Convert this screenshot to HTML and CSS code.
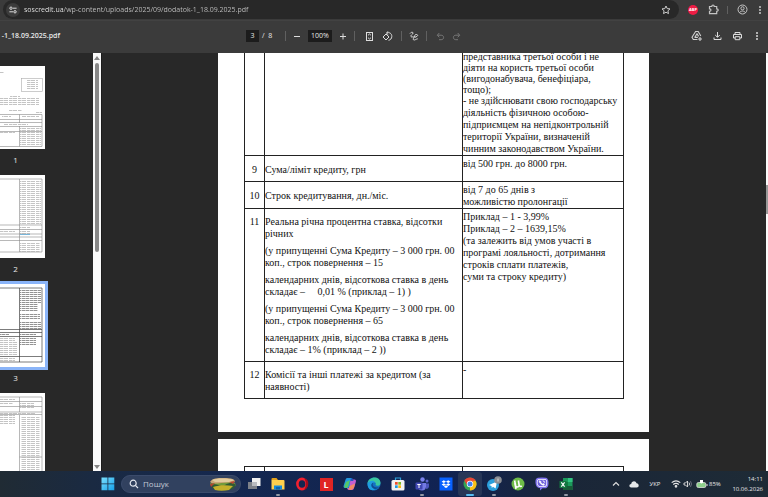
FILE: index.html
```html
<!DOCTYPE html>
<html lang="uk">
<head>
<meta charset="utf-8">
<title>dodatok-1_18.09.2025.pdf</title>
<link rel="stylesheet" href="styles.css">
</head>
<body>
<header class="browser-bar">
  <div class="address">
    <button class="site-info" aria-label="Site information"><svg width="8" height="8" viewBox="0 0 8 8" fill="none" stroke="#ddd"><circle cx="2" cy="2.2" r="1.2"/><path d="M4 2.2h3.6M.4 5.8H4"/><circle cx="6" cy="5.8" r="1.2"/></svg></button>
    <input class="url" aria-label="Address" value="soscredit.ua/wp-content/uploads/2025/09/dodatok-1_18.09.2025.pdf">
    <button class="slot-20" aria-label="Bookmark"><svg width="10" height="10" viewBox="0 0 10 10" fill="none" stroke="#ccc"><path d="M5 1l1.2 2.6 2.8.3-2.1 1.9.6 2.8L5 7.2 2.500 8.600l.6-2.800L1 3.900l2.800-.3z"/></svg></button>
  </div>
  <button class="slot-20" aria-label="AdBlock"><span class="abp">ABP</span></button>
  <button class="slot-20" aria-label="Extensions"><svg width="11" height="11" viewBox="0 0 11 11" fill="none" stroke="#c4c4c4" stroke-width="1.200"><path d="M1.500 2.500h2.300c0-2 2.400-2 2.400 0h2.500v2.400c2 0 2 2.400 0 2.400v2.400H1.500V7.300c2 0 2-2.400 0-2.400z"/></svg></button>
  <span class="divider browser-divider"></span>
  <button class="slot-20" aria-label="Profile"><svg width="11" height="11" viewBox="0 0 11 11" fill="none" stroke="#c4c4c4"><circle cx="5.500" cy="5.500" r="4.500"/><circle cx="5.500" cy="4.300" r="1.600"/><path d="M2.500 8.800c1-2.300 5-2.300 6 0"/></svg></button>
  <button class="slot-16" aria-label="Menu"><svg width="4" height="10" viewBox="0 0 4 10" fill="#c8c8c8"><circle cx="2" cy="2" r="1"/><circle cx="2" cy="5" r="1"/><circle cx="2" cy="8" r="1"/></svg></button>
</header>

<div class="pdf-bar">
  <div class="file-name">-1_18.09.2025.pdf</div>
  <input class="box page-box" aria-label="Page" value="3">
  <span class="page-total">/&nbsp; 8</span>
  <span class="divider"></span>
  <button class="slot-12" aria-label="Zoom out"><svg width="8" height="8" viewBox="0 0 8 8" stroke="#ddd"><path d="M1 4.500h6"/></svg></button>
  <input class="box zoom-box" aria-label="Zoom" value="100%">
  <button class="slot-12" aria-label="Zoom in"><svg width="8" height="8" viewBox="0 0 8 8" stroke="#ddd"><path d="M1 4.500h6M4 1.500v6"/></svg></button>
  <span class="divider"></span>
  <button class="slot-18" aria-label="Fit to page"><svg width="9" height="11" viewBox="0 0 9 11" fill="none" stroke="#ddd"><rect x="1.500" y="1.500" width="6" height="8"/><path d="M3 4.300l1.500-1.300L6 4.300M3 6.700L4.500 8 6 6.700"/></svg></button>
  <button class="slot-18" aria-label="Rotate"><svg width="11" height="11" viewBox="0 0 11 11" fill="none" stroke="#ddd"><path d="M4 3L1 6l3 3 3-3zM4.500 2c3-1.300 5.500.8 5.300 3.500-.1 2-1.300 3.500-3.300 3.800M6.300.3L4.500 2l1.800 1.700"/></svg></button>
  <span class="divider"></span>
  <button class="slot-14" aria-label="Draw"><svg width="10" height="10" viewBox="0 0 10 10" fill="none" stroke="#ddd"><path d="M1 2.500C2 1 4.200.8 4 2.200 3.700 3.500 1.300 4.200 2 5.600c.6 1 2.300-.4 2.800.4C5.200 7 3.500 8 4.500 8.800 6 9.500 7 8 8.700 7.800"/><path d="M5.500 6.200l.3-1.700L7.300 3l1.400 1.400L7.200 6z"/></svg></button>
  <span class="divider"></span>
  <button class="slot-16" aria-label="Undo"><svg width="9" height="9" viewBox="0 0 9 9" fill="none" stroke="#777"><path d="M3.300 1L1.300 3.200l2 2.100M1.500 3.200h3.700c3.200 0 3.200 4.500 0 4.500H3"/></svg></button>
  <button class="slot-16" aria-label="Redo"><svg width="9" height="9" viewBox="0 0 9 9" fill="none" stroke="#777"><path d="M5.700 1l2 2.200-2 2.100M7.500 3.200H3.800c-3.200 0-3.200 4.500 0 4.500H6"/></svg></button>
  <div class="pdf-actions">
    <button class="slot-20" aria-label="Save to Drive"><svg width="12" height="12" viewBox="0 0 12 12" fill="none" stroke="#d0d0d0" stroke-width="1.100"><path d="M6.500 9.500H2.300L1 7.300 4.600 1.500h2.600L9.800 6M3.800 7.300L6 3.800l1.600 2.600M3.500 7.400h3.400M9 7v4M7 9h4"/></svg></button>
    <button class="slot-20" aria-label="Download"><svg width="9" height="10" viewBox="0 0 9 10" fill="none" stroke="#ddd"><path d="M4.500 1v5M2.200 4l2.300 2.300L6.800 4M1 6.500v2h7v-2"/></svg></button>
    <button class="slot-20" aria-label="Print"><svg width="11" height="10" viewBox="0 0 11 10" fill="none" stroke="#ddd"><path d="M3 3.500v-2h5v2M3 7H1.500V3.500h8V7H8M3.200 5.700h4.600v3H3.200z"/></svg></button>
    <button class="slot-20" aria-label="More"><svg width="4" height="10" viewBox="0 0 4 10" fill="#d8d8d8"><circle cx="2" cy="2" r="1"/><circle cx="2" cy="5" r="1"/><circle cx="2" cy="8" r="1"/></svg></button>
  </div>
</div>

<main class="workspace">
  <nav class="sidebar" aria-label="Pages">
    <div class="thumbs">
      <figure class="thumb-item">
        <svg class="thumb" viewBox="0 0 59 83">
          <defs>
            <pattern id="text" width="9" height="2" patternUnits="userSpaceOnUse"><path d="M0 .5h4M5 .5h3.500" stroke="#aaa" stroke-width=".7"/></pattern>
            <pattern id="dark" width="8" height="2" patternUnits="userSpaceOnUse"><path d="M0 .5h3M3.600 .5h4" stroke="#777" stroke-width=".8"/></pattern>
          </defs>
          <rect x="12" y="6" width="6" height="2" fill="url(#text)"/><rect x="35.500" y="12.500" width="21" height="13" fill="none" stroke="#aaa" stroke-width=".6"/><rect x="40" y="14" width="12" height="10" fill="url(#text)"/><rect x="24" y="29" width="10" height="2" fill="url(#text)"/><rect x="5" y="32" width="48" height="8" fill="url(#text)"/><rect x="22" y="44" width="14" height="1" fill="url(#text)"/><rect x="50" y="46" width="6" height="1" fill="url(#text)"/>
          <path d="M2 48.500h54v32H2M33.500 48.500v8.500M33.500 60v20.500M2 53.500h54M2 56.500h54M2 60.500h54M2 65.500h54" fill="none" stroke="#888" stroke-width=".6"/><rect x="16" y="50" width="9" height="1" fill="url(#text)"/><rect x="36" y="50" width="17" height="2" fill="url(#text)"/><rect x="18" y="58" width="24" height="1" fill="url(#text)"/><rect x="34" y="61" width="21" height="19" fill="url(#text)"/><rect x="8" y="66" width="21" height="2" fill="url(#text)"/>
        </svg>
        <figcaption>1</figcaption>
      </figure>
      <figure class="thumb-item">
        <svg class="thumb" viewBox="0 0 59 83"><path d="M2 4h54v73H2M33.500 4v73M2 50h54M2 54.500h54M2 59h54M2 62h54M2 65.500h54" fill="none" stroke="#888" stroke-width=".6"/><rect x="34" y="5" width="21" height="44" fill="url(#text)"/><rect x="34" y="51" width="10" height="8" fill="url(#text)"/><rect x="34" y="59" width="10" height="1" fill="#79b5d8"/><rect x="4" y="56" width="25" height="2" fill="url(#text)"/><rect x="20" y="63" width="22" height="1" fill="url(#text)"/><rect x="34" y="67" width="20" height="10" fill="url(#text)"/><rect x="8" y="67" width="6" height="1" fill="url(#text)"/></svg>
        <figcaption>2</figcaption>
      </figure>
      <figure class="thumb-item current">
        <svg class="thumb" viewBox="0 0 59 83"><path d="M2 4h54v74H2M33.500 4v74M2 45.500h54M2 48.500h54M2 52.500h54M2 72.500h54" fill="none" stroke="#444" stroke-width=".7"/><rect x="34" y="5" width="21" height="14" fill="url(#dark)"/><rect x="34" y="20" width="18" height="8" fill="url(#dark)"/><rect x="34" y="30" width="20" height="6" fill="url(#dark)"/><rect x="34" y="38" width="21" height="8" fill="url(#dark)"/><rect x="34" y="49" width="16" height="13" fill="url(#dark)"/><rect x="3" y="47" width="18" height="1" fill="url(#dark)"/><rect x="3" y="50" width="20" height="1" fill="url(#dark)"/><rect x="3" y="54" width="26" height="3" fill="url(#text)"/><rect x="3" y="58" width="29" height="13" fill="url(#text)"/><rect x="3" y="74" width="26" height="3" fill="url(#text)"/></svg>
        <figcaption>3</figcaption>
      </figure>
      <figure class="thumb-item">
        <svg class="thumb" viewBox="0 0 59 83"><path d="M2 4h54v79M33.500 4v15M33.500 22v61M2 8.500h54M2 13.500h54M2 19h54M2 21.500h54M33.500 64h22.500" fill="none" stroke="#888" stroke-width=".6"/><rect x="3" y="5" width="26" height="3" fill="url(#text)"/><rect x="3" y="10" width="24" height="2" fill="url(#text)"/><rect x="34" y="9" width="14" height="7" fill="url(#text)"/><rect x="12" y="20" width="38" height="1" fill="url(#text)"/><rect x="3" y="22" width="26" height="10" fill="url(#text)"/><rect x="35" y="23" width="19" height="60" fill="url(#text)"/></svg>
      </figure>
    </div>
    <div class="scrollbar"><span class="arrow-up"></span><span class="scroll-thumb"></span><span class="arrow-down"></span></div>
  </nav>

  <section class="viewer">
    <article class="sheet first-sheet">
      <table>
        <colgroup><col class="col-number"><col class="col-name"><col class="col-value"></colgroup>
        <tr class="row-8"><td></td><td></td><td><p class="tight">представника третьої особи і не<br>діяти на користь третьої особи<br>(вигодонабувача, бенефіціара,<br>тощо);</p><p>- не здійснювати свою господарську<br>діяльність фізичною особою-<br>підприємцем на непідконтрольній<br>території України, визначеній<br>чинним законодавством України.</p></td></tr>
        <tr class="row-9"><td class="middle">9</td><td class="middle">Сума/ліміт кредиту, грн</td><td>від 500 грн. до 8000 грн.</td></tr>
        <tr class="row-10"><td class="middle">10</td><td class="middle">Строк кредитування, дн./міс.</td><td>від 7 до 65 днів з<br>можливістю пролонгації</td></tr>
        <tr class="row-11"><td class="lowered">11</td><td class="lowered"><p>Реальна річна процентна ставка, відсотки<br>річних</p><p>(у припущенні Сума Кредиту – 3 000 грн. 00<br>коп., строк повернення – 15</p><p>календарних днів, відсоткова ставка в день<br>складає –&nbsp;&nbsp;&nbsp; &nbsp;0,01 % (приклад – 1) )</p><p>(у припущенні Сума Кредиту – 3 000 грн. 00<br>коп., строк повернення – 65</p><p>календарних днів, відсоткова ставка в день<br>складає – 1% (приклад – 2 ))</p></td><td>Приклад – 1 - 3,99%<br>Приклад – 2 – 1639,15%<br>(та залежить від умов участі в<br>програмі лояльності, дотримання<br>строків сплати платежів,<br>суми та строку кредиту)</td></tr>
        <tr class="row-12"><td class="lowered">12</td><td class="lowered">Комісії та інші платежі за кредитом (за<br>наявності)</td><td>-</td></tr>
      </table>
    </article>
    <article class="sheet next-sheet">
      <table>
        <colgroup><col class="col-number"><col class="col-name"><col class="col-value"></colgroup>
        <tr class="row-12"><td></td><td></td><td></td></tr>
      </table>
    </article>
  </section>
  <div class="page-scroll"><span></span></div>
</main>

<footer class="taskbar">
  <button class="app" aria-label="Start"><svg width="14" height="14" viewBox="0 0 14 14"><defs><linearGradient id="win" x2="1" y2="1"><stop stop-color="#7be0ff"/><stop offset="1" stop-color="#159fe8"/></linearGradient></defs><path fill="url(#win)" d="M.5.500h6v6h-6zM7.300.500h6v6h-6zM.5 7.300h6v6h-6zM7.300 7.300h6v6h-6z"/></svg></button>
  <label class="search">
    <svg width="10" height="10" viewBox="0 0 10 10" fill="none" stroke="#e4e8f0" stroke-width="1.200"><circle cx="4.200" cy="4.200" r="3"/><path d="M6.400 6.400L9 9"/></svg>
    <input placeholder="Пошук" aria-label="Пошук">
    <svg width="28" height="15" viewBox="0 0 28 15"><path d="M1 5C3 1 9 1 14 1s12 0 12 4l-5 2H4z" fill="#c9a878"/><path d="M3 3c5-2 15-2 22 0l-4 2H6z" fill="#e3cc9e"/><path d="M1 6c7 2 15-2 25 0l1 3C19 8 9 12 2 9z" fill="#729b3c"/><path d="M2 8c6-3 9 3 14 0s9-2 11 0l-3 4c-7 2-14 2-20 0z" fill="#2f5b34"/><path d="M4 10c6-2 13-2 20-1l-4 4c-5 1-10 1-14 0z" fill="#c5b02b"/><path d="M1 7l5-1-4 4zM20 5l6-1-2 3z" fill="#b4462e"/></svg>
  </label>
  <button class="app" aria-label="Task view"><svg width="14" height="14" viewBox="0 0 14 14"><path d="M5 1h8.500v8H5z" fill="#f0f0f0"/><path d="M1 5h9v7H1z" fill="#7c8088"/><path d="M5 5h5v4H5z" fill="#b9bbc0"/></svg></button>
  <button class="app open" aria-label="Explorer"><svg width="14" height="14" viewBox="0 0 14 14"><path d="M.5 2q0-1 1-1h4L7 3H.5z" fill="#e5a21a"/><path d="M.5 3h12q1 0 1 1v8.500H.5z" fill="#ffd04d"/><path d="M3 8.500h8v4H3z" fill="#168bd9"/><path d="M5 10h4v2.500H5z" fill="#0c65ae"/></svg></button>
  <button class="app" aria-label="Opera"><svg width="14" height="14" viewBox="0 0 14 14"><ellipse cx="7" cy="7" rx="4.600" ry="5.100" fill="none" stroke="#f2202f" stroke-width="2.600"/><path d="M9 1.200c3.300.6 4.600 3 4.300 6-.3 3-2 5-4.300 5.600 2.600-3 2.600-8.600 0-11.600" fill="#a50b1c"/></svg></button>
  <button class="app" aria-label="Liga"><span class="letter-app">L</span></button>
  <button class="app" aria-label="Copilot"><svg width="14" height="14" viewBox="0 0 14 14"><path d="M4 1h4q1 0 1.400 1L7 9q-.6 2-2 2H2Q0 11 .7 8.600L2.400 3Q3 1 4 1z" fill="#2299df"/><path d="M3 5l-2 5q2 2 4 0l2-7z" fill="#54c768"/><path d="M7 4q.6-1.500 2-1.500h2.500q2 0 1.300 2.500l-1.600 5.500Q10.600 13 9 13H6q-1.500 0-2-2h1.500q1 0 1.300-1.500z" fill="#c55fd2"/><path d="M6.500 9L5.500 12.500q4 1.500 5.500-2l1-4z" fill="#f38a65"/><path d="M8 1q2 0 2.500 3H7.500l-1 3z" fill="#2459c2"/></svg></button>
  <button class="app" aria-label="Edge"><svg width="14" height="14" viewBox="0 0 14 14"><circle cx="7" cy="7" r="6.500" fill="#1572c2"/><path d="M.5 7C.5-1 13.500-2 13.500 6c0 3-4 3.500-5 2 .8-1.500 0-3.300-2-3.300C4 4.700 1 5.500.5 7z" fill="#3ac7a0"/><path d="M.5 7C1 3.700 7.500 2.700 8 5.500 4 4.500 3.500 10 8 12.800 3 14.500.5 11 .5 7z" fill="#1e9de0"/><path d="M6.300 5.500c-2 3 1 5.500 5.500 4.800-2 2.500-6 2-7.300-.8-.8-2 .4-3.500 1.800-4z" fill="#104a91"/></svg></button>
  <button class="app" aria-label="Store"><svg width="14" height="14" viewBox="0 0 14 14"><path d="M4.500 4V1h5v3" fill="none" stroke="#2d9fd8" stroke-width="1.200"/><rect x=".5" y="3" width="13" height="10.500" rx="1.500" fill="#f2f2f2"/><path d="M4 5h2.700v2.700H4z" fill="#ee502c"/><path d="M7.300 5H10v2.700H7.300z" fill="#7bb928"/><path d="M4 8.300h2.700V11H4z" fill="#1c9ce5"/><path d="M7.300 8.300H10V11H7.300z" fill="#f7b817"/></svg></button>
  <button class="app open" aria-label="Teams"><svg width="14" height="14" viewBox="0 0 14 14"><circle cx="7.500" cy="2.500" r="2.200" fill="#7a82ec"/><circle cx="12" cy="4" r="1.500" fill="#5b63cf"/><path d="M4 6h7v4q-.5 3.500-4 3.500T3 10z" fill="#7379e4"/><path d="M11 6.500h3V10q-.5 2-3 2z" fill="#4e56be"/><rect x=".5" y="5.500" width="7" height="7" rx="1" fill="#4048b2"/><path d="M2.300 7.500h3.400M4 7.500V11" stroke="#fff"/></svg></button>
  <button class="app" aria-label="Dropbox"><svg width="14" height="14" viewBox="0 0 14 14"><path d="M.5.500h13v13H.5z" fill="#0861fe"/><path d="M4.800 3.300L7 4.700 4.800 6.100 2.600 4.700zM9.200 3.300l2.200 1.400-2.200 1.400L7 4.700zM4.800 6.200L7 7.600 4.800 9 2.600 7.600zM9.200 6.200l2.200 1.400L9.200 9 7 7.600zM7 8.300l2.200 1.400L7 11.100 4.800 9.700z" fill="#fff"/></svg></button>
  <button class="app open active" aria-label="Chrome"><svg width="14" height="14" viewBox="0 0 14 14"><circle cx="7" cy="7" r="6.500" fill="#34a553"/><path d="M1.400 3.700a6.500 6.500 0 0 1 11.200 0L7 6.500z" fill="#e94435"/><path d="M12.600 3.700A6.500 6.500 0 0 1 7 13.500L7 7V3.700z" fill="#fbc116"/><path d="M1.400 3.700L4.300 8.500 7 7l4-3.300z" fill="#e94435"/><circle cx="7" cy="7" r="3.200" fill="#fff"/><circle cx="7" cy="7" r="2.500" fill="#4285ed"/></svg></button>
  <button class="app open" aria-label="Telegram"><svg width="16" height="16" viewBox="0 0 16 16"><circle cx="7" cy="9" r="6" fill="#2ba0dc"/><path d="M3 9l8-3.500L9.600 12.500 7 10.700 5.800 12l-.3-2z" fill="#fff"/><circle cx="12" cy="4" r="3.800" fill="#8c8f94"/><path d="M12 2.500v3" stroke="#ddd"/></svg></button>
  <button class="app" aria-label="uTorrent"><svg width="14" height="14" viewBox="0 0 14 14"><circle cx="7" cy="7" r="6.500" fill="#6ebc48"/><path d="M3.600 3.500l1 5c.5 2 3 2 3.600 0l-.8-5M8 8.500c.5 1 2 1 2.800.5M3.800 6L5 12" fill="none" stroke="#fff" stroke-width="1.600"/></svg></button>
  <button class="app" aria-label="Viber"><svg width="14" height="14" viewBox="0 0 14 14"><path d="M3 .8q4-.8 8 0 2.500.7 2.500 5.200T11 11.200H7.500L5 13.500V11Q1 11 .5 6T3 .8z" fill="#8173ef"/><path d="M3 2.300q4-.6 8 0 1.300 1 1.100 4T10.500 9.700H4Q1.700 9 1.800 6T3 2.300z" fill="#fff"/><path d="M3.300 3q3.700-.5 7.400 0 .8 1 .7 3t-1 3H4Q2.500 8 2.500 6t.8-3z" fill="#6e60dc"/><path d="M4.300 3.500c-1 1.500 2 5 4.700 5l.7-1.200-1.500-1-.7.6L5.600 5l.7-.5zM7.500 3.500q2.500.2 2.300 2.500" fill="#fff" stroke="#fff" stroke-width=".3"/></svg></button>
  <button class="app open" aria-label="Excel"><svg width="14" height="14" viewBox="0 0 14 14"><path d="M4 1h9.500v12H4z" fill="#1c9a5b"/><path d="M9 1h4.500v4H9z" fill="#32c481"/><path d="M4 5h5v4H4z" fill="#107c41"/><path d="M4 9h9.500v4H4z" fill="#185c37"/><path d="M.5 4h7v7h-7z" fill="#137540"/><path d="M2.300 5.300l3.300 4.400M5.600 5.300L2.300 9.700" stroke="#fff" stroke-width="1.100"/></svg></button>
  <div class="tray">
    <button class="slot-18" aria-label="Hidden icons"><svg width="8" height="6" viewBox="0 0 8 6" fill="none" stroke="#ddd" stroke-width="1.200"><path d="M1 4.500l3-3 3 3"/></svg></button>
    <button class="slot-18" aria-label="OneDrive"><svg width="10" height="8" viewBox="0 0 10 8"><path d="M2.300 7.500C-.5 7.500 0 4 2.200 4 2.500.500 7 .300 7.500 3.300c3 .2 2.800 4.200.2 4.200z" fill="#e6e8ea"/></svg></button>
    <button class="language">УКР</button>
    <svg class="wifi" width="10" height="8" viewBox="0 0 10 8" fill="none" stroke="#e4e4e4" stroke-width="1.100"><path d="M.7 2.700q4.300-3.700 8.600 0M2.200 4.500q2.800-2.300 5.600 0"/><circle cx="5" cy="6.300" r=".8" fill="#e4e4e4"/></svg>
    <svg width="10" height="8" viewBox="0 0 10 8" fill="none" stroke="#e0e0e0" stroke-width=".9"><path d="M1 3v2h1.500l2 2V1l-2 2zM6 2.500q1.200 1.500 0 3"/><path d="M7.500 1.200q2 2.800 0 5.600" stroke="#778"/></svg>
    <svg class="battery" width="12" height="9" viewBox="0 0 12 9"><rect x=".8" y="2.500" width="9" height="5" rx="1.500" fill="#8cd18b" stroke="#ddd" stroke-width=".8"/><path d="M11 4v2" stroke="#ddd"/><path d="M4 0h3v2.300q-1.500 2.500-3 0z" fill="#fff"/></svg>
    <span class="percent">85%</span>
    <time class="clock">14:11<br>10.06.2026</time>
  </div>
</footer>
</body>
</html>
```
FILE: styles.css
```css
* { box-sizing: border-box; }
body {
  margin: 0;
  height: 100vh;
  display: grid;
  grid-template-rows: 21px 32px minmax(0, 1fr) 26px;
  overflow: hidden;
  background: #3b3b3b;
  color: #e8e8e8;
  font-family: "Open Sans", "Noto Sans", sans-serif;
  font-size: 7px;
  line-height: 12px;
}
button, input {
  margin: 0;
  padding: 0;
  border: 0;
  background: none;
  color: inherit;
  font: inherit;
}
input { min-width: 0; }
button {
  display: flex;
  flex: none;
  align-items: center;
  justify-content: center;
}
svg { display: block; flex: none; }
p, figure { margin: 0; }
.slot-12 { width: 12px; }
.slot-14 { width: 14px; }
.slot-16 { width: 16px; }
.slot-18 { width: 18px; }
.slot-20 { width: 20px; }

.browser-bar {
  display: flex;
  align-items: center;
  padding: 0 0 1px 3px;
  border-bottom: 1px solid #424242;
}
.address {
  display: flex;
  flex: 1;
  align-items: center;
  height: 19px;
  margin-right: 4px;
  padding: 0 3px;
  border-radius: 10px;
  background: #282828;
}
.site-info {
  width: 14px;
  height: 14px;
  border-radius: 50%;
  background: #3c3c3c;
}
.url {
  flex: 1;
  margin-left: 4px;
  background: linear-gradient(90deg, #f0f0f0 40px, #c4c4c4 40px);
  background-clip: text;
  color: transparent;
}
.abp {
  width: 10px;
  height: 10px;
  border-radius: 50%;
  background: #ee1c44;
  color: #fff;
  font-size: 4px;
  font-weight: 700;
  line-height: 10px;
}
.divider {
  flex: none;
  width: 1px;
  height: 10px;
  margin: 0 5px;
  background: #606060;
}
.browser-divider { margin: 0 4px; height: 8px; }

.pdf-bar {
  display: flex;
  align-items: center;
  padding: 0 1px 2px 0;
}
.file-name {
  display: flex;
  flex: none;
  justify-content: flex-end;
  width: 60px;
  margin-right: 186px;
  white-space: nowrap;
  font-weight: 600;
}
.box {
  flex: none;
  height: 12px;
  background: #1c1c1c;
  text-align: center;
}
.page-box { width: 13px; }
.page-total { width: 21px; padding-left: 3px; white-space: nowrap; }
.zoom-box { width: 24px; margin: 0 5px; }
.pdf-actions { display: flex; margin-left: auto; }

.workspace {
  display: flex;
  min-height: 0;
  background: #282828;
}
.sidebar {
  display: flex;
  flex: none;
  justify-content: space-between;
  width: 102px;
  overflow: hidden;
  border-right: 1px solid #1c1c1c;
}
.thumbs {
  flex: none;
  width: 59px;
  margin-left: -14px;
  padding-top: 13px;
}
.thumb-item { height: 109px; text-align: center; }
.thumb { width: 59px; height: 83px; background: #fff; }
.current .thumb { outline: 3px solid #8ab4f8; }
figcaption { padding-top: 5px; font-size: 8px; }
.scrollbar {
  display: flex;
  flex-direction: column;
  align-items: center;
  width: 8px;
  padding: 3px 0 2px;
  background: #fafafa;
}
.arrow-up, .arrow-down {
  border: 3px solid transparent;
  border-top-width: 0;
  border-bottom: 4px solid #858585;
}
.arrow-down { margin-top: auto; transform: rotate(180deg); }
.scroll-thumb {
  width: 4px;
  height: 189px;
  margin-top: 3px;
  border-radius: 2px;
  background: #888;
}

.viewer { flex: 1; padding-right: 1px; overflow: hidden; }
.sheet {
  width: 431px;
  margin: 0 auto 7px;
  padding: 0 0 33px 26px;
  background: #fff;
  color: #111;
  font-family: "Liberation Serif", serif;
  font-size: 10px;
}
.first-sheet { margin-top: -6px; }
.next-sheet { padding-top: 27px; }
table {
  width: 380px;
  table-layout: fixed;
  border-collapse: collapse;
}
.col-number { width: 20px; }
.col-name { width: 198px; }
td {
  padding: 2px 0 0;
  border: 1px solid #222;
  vertical-align: top;
  white-space: nowrap;
}
td:first-child { text-align: center; }
.middle { vertical-align: middle; }
.lowered { padding-top: 7px; }
.lowered p + p { margin-top: 5px; }
.tight { line-height: 11px; }
.row-8 td { height: 108px; padding-top: 0; vertical-align: bottom; }
.row-9 { height: 26px; }
.row-10 { height: 27px; }
.row-11 { height: 153px; }
.row-12 { height: 37px; }
.page-scroll {
  flex: none;
  width: 2px;
  padding-top: 132px;
  background: #fafafa;
}
.page-scroll span { display: block; height: 29px; background: #999; }

.taskbar {
  display: flex;
  align-items: center;
  padding: 0 5px 0 96px;
  background: linear-gradient(90deg, #202b34, #1a2a42 12%, #14274f 30%, #112353 58%, #1a2638 73%, #1e2b36);
}
.app {
  position: relative;
  width: 24px;
  height: 24px;
}
.open::after {
  content: "";
  position: absolute;
  bottom: 0;
  left: 10px;
  width: 4px;
  height: 2px;
  border-radius: 1px;
  background: #9299a5;
}
.active { border-radius: 3px; background: #273657; }
.active::after { left: 8px; width: 8px; background: #55bdf2; }
.search {
  display: flex;
  flex: none;
  align-items: center;
  width: 120px;
  height: 18px;
  margin: 0 1px;
  padding: 0 3px 0 7px;
  border: 1px solid #3b4b6b;
  border-radius: 9px;
  background: #31415f;
}
.search input { flex: 1; margin-left: 4px; font-size: 8px; }
.search input::placeholder { color: #c3cad6; opacity: 1; }
.letter-app {
  width: 13px;
  height: 13px;
  background: #e02424;
  color: #fff;
  font-size: 9px;
  font-weight: 700;
  line-height: 13px;
}
.tray {
  display: flex;
  flex: none;
  align-items: center;
  margin-left: auto;
}
.language { width: 24px; margin-right: 4px; font-size: 6px; }
.wifi { margin-right: 2px; }
.battery { margin-left: 3px; }
.percent { width: 14px; margin-left: 1px; font-size: 6px; }
.clock { width: 40px; font-size: 6px; line-height: 10px; text-align: right; }
```
